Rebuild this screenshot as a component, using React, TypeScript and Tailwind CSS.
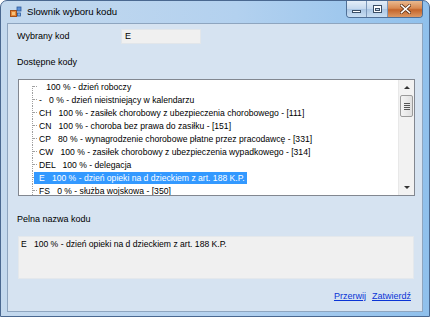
const items = [
  "   100 % - dzień roboczy",
  "-   0 % - dzień nieistniejący w kalendarzu",
  "CH   100 % - zasiłek chorobowy z ubezpieczenia chorobowego - [111]",
  "CN   100 % - choroba bez prawa do zasiłku - [151]",
  "CP   80 % - wynagrodzenie chorobowe płatne przez pracodawcę - [331]",
  "CW   100 % - zasiłek chorobowy z ubezpieczenia wypadkowego - [314]",
  "DEL   100 % - delegacja",
  "E   100 % - dzień opieki na d dzieckiem z art. 188 K.P.",
  "FS   0 % - służba wojskowa - [350]",
];

const selected = 7;

function AppIcon() {
  return (
    <svg width="12" height="12" viewBox="0 0 12 12">
      <rect x="0.5" y="4.5" width="6" height="6" fill="#e8893a" stroke="#a4531b" />
      <rect x="7" y="1" width="4" height="4" fill="#5b8fd6" stroke="#2d5a9c" strokeWidth="0.8" />
      <rect x="7.5" y="7" width="3" height="3" fill="#7fb0e6" stroke="#2d5a9c" strokeWidth="0.8" />
      <rect x="2" y="6" width="3" height="3" fill="#f6c27a" />
    </svg>
  );
}

function TitleButtons() {
  return (
    <div className="flex h-[17px] mr-[6px] border border-t-0 border-[#4f6f96] rounded-b-[4px] overflow-hidden">
      <div className="w-[20px] h-full flex items-center justify-center border-r border-[#7d98ba] bg-[linear-gradient(180deg,#e4eef8_0%,#c4d8ee_50%,#aac6e4_51%,#c9def2_100%)]">
        <div className="w-[9px] h-[3px] mt-[4px] bg-white border border-[#3b4f66]" />
      </div>
      <div className="w-[21px] h-full flex items-center justify-center border-r border-[#7d98ba] bg-[linear-gradient(180deg,#e4eef8_0%,#c4d8ee_50%,#aac6e4_51%,#c9def2_100%)]">
        <div className="w-[9px] h-[8px] border border-[#3b4f66] bg-white flex items-center justify-center">
          <div className="w-[5px] h-[3px] mt-[1px] border border-[#3b4f66] bg-[#c9dcef]" />
        </div>
      </div>
      <div className="w-[34px] h-full flex items-center justify-center bg-[linear-gradient(180deg,#eab98f_0%,#d98a52_45%,#c4652b_55%,#dc9864_100%)]">
        <svg width="11" height="10" viewBox="0 0 11 10">
          <path d="M1.5 1.5 L9.5 8.5 M9.5 1.5 L1.5 8.5" stroke="#5a3016" strokeWidth="3" strokeLinecap="square" />
          <path d="M1.5 1.5 L9.5 8.5 M9.5 1.5 L1.5 8.5" stroke="#ffffff" strokeWidth="1.6" strokeLinecap="square" />
        </svg>
      </div>
    </div>
  );
}

function Scrollbar() {
  return (
    <div className="w-[16px] flex flex-col bg-[#f2f2f2] border-l border-[#e8e8e8]">
      <div className="h-[15px] flex items-center justify-center">
        <div className="w-0 h-0 border-x-[3px] border-x-transparent border-b-[3px] border-b-[#333]" />
      </div>
      <div className="mx-[1px] h-[22px] rounded-[2px] border border-[#9b9b9b] bg-[linear-gradient(90deg,#f4f4f4,#e0e0e0)] flex flex-col items-center justify-center gap-[1px]">
        <div className="w-[6px] h-[1px] bg-[#555]" />
        <div className="w-[6px] h-[1px] bg-[#555]" />
        <div className="w-[6px] h-[1px] bg-[#555]" />
        <div className="w-[6px] h-[1px] bg-[#555]" />
      </div>
      <div className="flex-1" />
      <div className="h-[15px] flex items-center justify-center">
        <div className="w-0 h-0 border-x-[3px] border-x-transparent border-t-[3px] border-t-[#333]" />
      </div>
    </div>
  );
}

function Tree() {
  return (
    <div className="ml-[1px] w-[397px] h-[117px] border border-[#828790] bg-white flex">
      <div className="flex-1 min-w-0 overflow-hidden">
        {items.map((t, i) => (
          <div key={i} className="h-[13px] flex items-center">
            <div className="relative w-[15px] h-full shrink-0">
              <div
                className={
                  "absolute left-[13px] w-0 border-l border-dotted border-[#a0a0a0] " +
                  (i === 0 ? "top-[6px] bottom-0" : "top-0 bottom-0")
                }
              />
              <div className="absolute left-[14px] top-[6px] w-[4px] h-0 border-t border-dotted border-[#a0a0a0]" />
            </div>
            <span
              className={
                "relative shrink-0 whitespace-pre pl-[5px] pr-[2px] h-[12px] text-[8.6px] leading-[12px] " +
                (i === selected ? "bg-[#3399ff] text-white" : "text-black")
              }
            >
              {t}
            </span>
          </div>
        ))}
      </div>
      <Scrollbar />
    </div>
  );
}

export default function App() {
  return (
    <div className="w-[430px] h-[317px] flex flex-col rounded-t-[7px] border border-[#4a6890] bg-[linear-gradient(90deg,#c4d9ee_0%,#b3d1ef_55%,#8fc0ec_100%)] font-['Liberation_Sans',Arial,sans-serif] text-black">
      <div className="h-[22px] flex items-start shrink-0">
        <div className="ml-[9px] mt-[5px]">
          <AppIcon />
        </div>
        <div className="ml-[5px] mt-[5px] text-[9.6px] leading-[12px] text-black">Slownik wyboru kodu</div>
        <div className="ml-auto">
          <TitleButtons />
        </div>
      </div>
      <div className="flex-1 mx-[6px] mb-[4px] border border-[#8ea5bf] bg-[#d6e3f1] flex flex-col px-[9px] text-[9px] leading-[11px]">
        <div className="mt-[5px] flex items-center h-[15px]">
          <div className="w-[104px]">Wybrany kod</div>
          <div className="w-[80px] h-[15px] bg-[#f0f0f0] border border-[#e2e6ea] pl-[3px] leading-[13px]">E</div>
        </div>
        <div className="mt-[13px]">Dostępne kody</div>
        <div className="mt-[11px]">
          <Tree />
        </div>
        <div className="mt-[18px]">Pelna nazwa kodu</div>
        <div className="mt-[11px] ml-[1px] w-[396px] h-[43px] bg-[#f0f0f0] border border-[#e4e8ec] pl-[2px] pt-[2px] text-[8.6px] leading-[11px] whitespace-pre">
          E   100 % - dzień opieki na d dzieckiem z art. 188 K.P.
        </div>
        <div className="mt-[12px] flex justify-end gap-[6px] pr-[2px] text-[#0a34d6]">
          <span className="underline">Przerwij</span>
          <span className="underline">Zatwierdź</span>
        </div>
      </div>
    </div>
  );
}
